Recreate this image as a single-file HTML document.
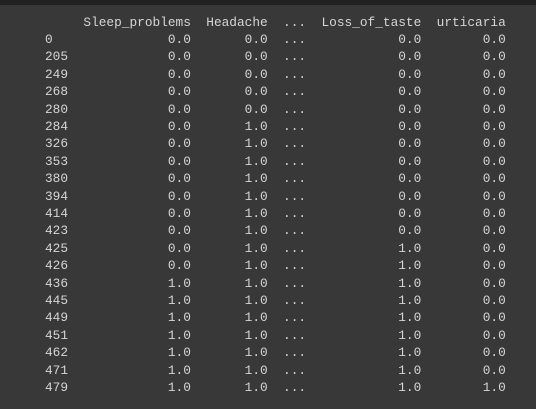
<!DOCTYPE html>
<html><head><meta charset="utf-8"><style>
html,body{margin:0;padding:0;width:536px;height:409px;overflow:hidden;background:#383838;}
.top{position:absolute;left:0;top:0;width:536px;height:5px;background:#212121;}
pre{position:absolute;left:45px;top:13.5px;margin:0;font-family:"Liberation Mono",monospace;font-size:12.8px;line-height:17.4px;color:#d5d5d5;}
</style></head><body>
<div class="top"></div>
<pre>     Sleep_problems  Headache  ...  Loss_of_taste  urticaria
0               0.0       0.0  ...            0.0        0.0
205             0.0       0.0  ...            0.0        0.0
249             0.0       0.0  ...            0.0        0.0
268             0.0       0.0  ...            0.0        0.0
280             0.0       0.0  ...            0.0        0.0
284             0.0       1.0  ...            0.0        0.0
326             0.0       1.0  ...            0.0        0.0
353             0.0       1.0  ...            0.0        0.0
380             0.0       1.0  ...            0.0        0.0
394             0.0       1.0  ...            0.0        0.0
414             0.0       1.0  ...            0.0        0.0
423             0.0       1.0  ...            0.0        0.0
425             0.0       1.0  ...            1.0        0.0
426             0.0       1.0  ...            1.0        0.0
436             1.0       1.0  ...            1.0        0.0
445             1.0       1.0  ...            1.0        0.0
449             1.0       1.0  ...            1.0        0.0
451             1.0       1.0  ...            1.0        0.0
462             1.0       1.0  ...            1.0        0.0
471             1.0       1.0  ...            1.0        0.0
479             1.0       1.0  ...            1.0        1.0</pre>
</body></html>
